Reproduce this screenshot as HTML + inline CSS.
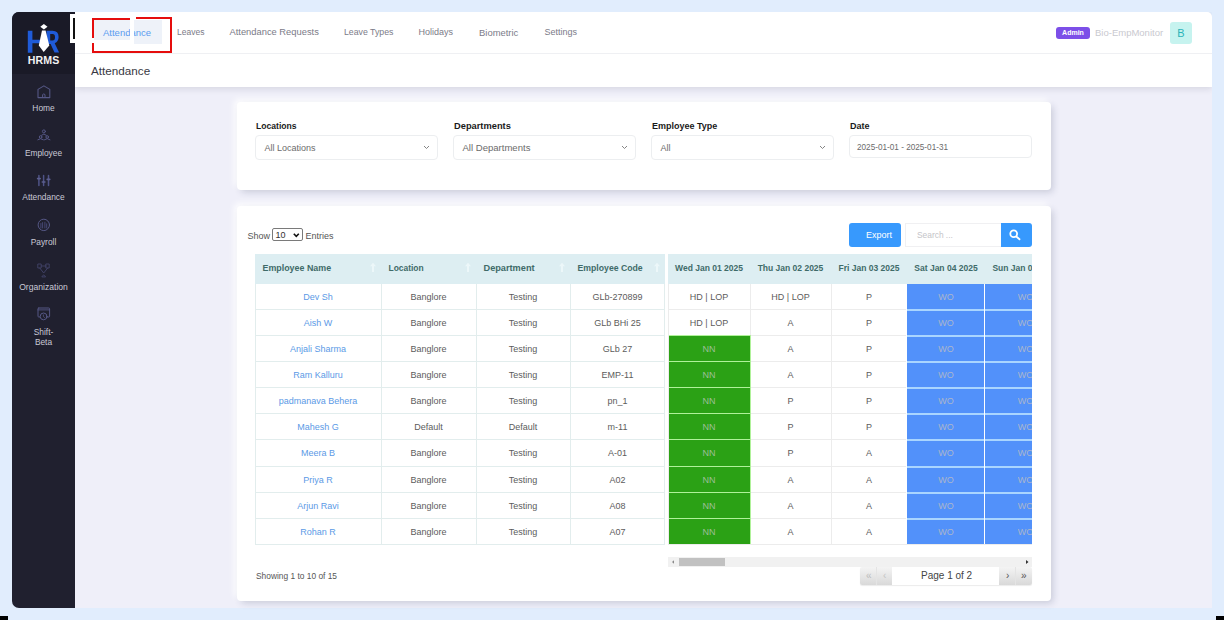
<!DOCTYPE html>
<html><head><meta charset="utf-8">
<style>
*{box-sizing:border-box;margin:0;padding:0}
html,body{width:1224px;height:620px;overflow:hidden}
body{background:#e1edfd;font-family:"Liberation Sans",sans-serif;position:relative;color:#555}
.abs{position:absolute}
.t{position:absolute;white-space:nowrap;line-height:1}
#side{left:12px;top:12px;width:63px;height:596px;background:#20202f;border-radius:7px 0 0 7px;overflow:hidden}
#logo{left:0;top:0;width:63px;height:62px;background:#1a1a27}
#main{left:75px;top:12px;width:1137px;height:596px;background:#efeff9;border-radius:0 5px 0 0}
#hdr{left:75px;top:12px;width:1137px;height:75px;background:#fff;border-radius:0 5px 0 0;box-shadow:0 2px 6px rgba(30,30,60,.12);clip-path:inset(0 0 -12px 0)}
#hline{left:75px;top:53px;width:1137px;height:1px;background:#eff0f3}
.nav{font-size:9px;color:#7b7b88}
.card{background:#fff;border-radius:4px;box-shadow:3px 3px 7px -1px rgba(40,50,90,.20),-3px -3px 6px rgba(255,255,255,.85)}
.lbl{font-size:9px;font-weight:700;color:#1a1a1a}
.sel{position:absolute;border:1px solid #eceef0;border-radius:4px;background:#fff}
.selt{font-size:9px;color:#6b6b6b}
.side-t{font-size:8.4px;color:#c9c9d6;text-align:center;width:63px;left:0}
table{border-collapse:collapse;table-layout:fixed;position:absolute}
td,th{height:26.2px;text-align:center;font-size:9px;color:#5c5c5c;white-space:nowrap;overflow:hidden;padding:0}
th{height:30px;background:#ddeef2;color:#3f6b69;font-weight:700;text-align:left;padding-left:7px}
#lt td{border:1px solid #d9eaea}
#lt th{border:1px solid #d9eaea;border-top:none}
#rt td{border:1px solid #ebebeb}
#rt th{border:1px solid #ddeef2;text-align:center;padding:0}
td.nm{color:#5b9ae6}
.th{font-size:9px;font-weight:700;color:#3f6b69}
.td{font-size:9px;color:#5c5c5c;text-align:center}
.td.nm{color:#5b9ae6}
.td.nn{color:#9fbf98}
.td.wo{color:#aab6cc}
.sorti{width:3px;height:9px;background:#eef7f8;border-radius:1px}
td.g{background:#2ea01c;color:#b9c9b5;border-color:#a7e49a !important}
td.b{background:#5592f6;color:#c7d2e6;border-color:#c4defc !important;border-left-color:#fff !important;border-right-color:#fff !important}
</style></head>
<body>
<!-- corner artifacts -->
<div class="abs" style="left:0;top:616px;width:8px;height:4px;background:#000"></div>
<div class="abs" style="left:1216px;top:616px;width:8px;height:4px;background:#000"></div>

<div id="main" class="abs"></div>
<div id="side" class="abs">
  <div id="logo" class="abs"></div>
</div>

<!-- sidebar content -->
<svg class="abs" style="left:26px;top:22px" width="36" height="32" viewBox="0 0 36 32">
  <path d="M1.8 8.7 H6.4 V17.7 H14 V21.2 H6.4 V30.8 H1.8 Z" fill="#1f5bd8"/>
  <path fill-rule="evenodd" d="M20.5 8.7 H26.5 Q32.6 8.7 32.6 15 Q32.6 19.6 28.7 21.2 L33.1 30.5 H28.5 L24.6 22 H20.5 Z M24.2 12.1 V18.6 H26.6 Q29 18.6 29 15.35 Q29 12.1 26.6 12.1 Z" fill="#1f5bd8"/>
  <path d="M17.9 2 L21.5 4.8 L17.9 7.6 L14.3 4.8 Z" fill="#fff"/>
  <path d="M16 8.4 H19.6 L23.3 23.5 L17.7 30 L12.8 23.5 Z" fill="#fff"/>
</svg>
<div class="t" style="left:12px;width:63px;text-align:center;top:55px;font-size:10.6px;font-weight:700;color:#f2f2f2;letter-spacing:0.1px">HRMS</div>

<svg class="abs" style="left:0;top:0" width="90" height="340" viewBox="0 0 90 340" fill="none" stroke="#555785" stroke-linejoin="round" stroke-linecap="round">
  <!-- home -->
  <path d="M38 97.6 V89.4 L43.9 85.9 L49.8 89.4 V97.6 Z" stroke-width="1.1"/>
  <path d="M42.6 97.4 V94.6 Q43.8 93.2 45 94.6 V97.4" stroke-width="1"/>
  <!-- employee -->
  <circle cx="43.9" cy="131.4" r="1.5" stroke-width="1"/>
  <path d="M41.5 135.2 Q43.9 132.6 46.3 135.2" stroke-width="1"/>
  <circle cx="40.6" cy="137" r="1.3" stroke-width="1"/>
  <circle cx="47.2" cy="137" r="1.3" stroke-width="1"/>
  <path d="M37.8 139.7 Q40.6 137.4 43.4 139.7 M44.4 139.7 Q47.2 137.4 50 139.7" stroke-width="1"/>
  <!-- attendance sliders -->
  <path d="M38.9 175.6 V185.6 M43.6 175.6 V185.6 M48.5 175.6 V185.6" stroke-width="1.5" stroke="#4f5387"/>
  <path d="M37.6 178.6 H40.2 M42.3 182 H44.9 M47.2 179.4 H49.8" stroke-width="1.6" stroke="#5d5f8f"/>
  <!-- payroll -->
  <circle cx="43.8" cy="224.9" r="5.7" stroke-width="1"/>
  <path d="M40.9 223.5 V228 M42.6 222.6 V228 M44.9 222.2 V228 M46.7 223.8 V228" stroke-width="0.9" stroke="#4a4c7c"/>
  <!-- organization -->
  <path d="M38.2 264 H41.2 V268 H38.2 Z M46.2 264 H49.2 V268 H46.2 Z" stroke-width="0.8" stroke="#464870"/>
  <path d="M41.2 266 H46.2 M39.7 268 L43.7 273 L47.7 268" stroke-width="0.8" stroke="#464870"/>
  <path d="M42 276.6 Q43.7 273.2 45.4 276.6 Z" stroke-width="0.8" stroke="#464870"/>
  <!-- shift -->
  <rect x="38" y="308" width="11.6" height="9" rx="0.8" stroke-width="1"/>
  <path d="M38 309.9 H49.6" stroke-width="0.9"/>
  <circle cx="43.6" cy="316.4" r="3.4" fill="#20202f" stroke-width="1"/>
  <path d="M43.4 314.9 V316.5 L44.5 317.5" stroke-width="0.8"/>
</svg>
<div class="t side-t" style="left:12px;top:104px">Home</div>

<div class="t side-t" style="left:12px;top:149px">Employee</div>

<div class="t side-t" style="left:12px;top:193px">Attendance</div>

<div class="t side-t" style="left:12px;top:237.5px">Payroll</div>

<div class="t side-t" style="left:12px;top:282.5px;font-size:8.6px">Organization</div>

<div class="t side-t" style="left:12px;top:327.5px">Shift-</div>
<div class="t side-t" style="left:12px;top:337.5px">Beta</div>

<div id="hdr" class="abs"></div>
<div id="hline" class="abs"></div>


<!-- header right -->
<div class="abs" style="left:1056px;top:27px;width:34px;height:12px;background:#7c4fe8;border-radius:3px"></div>
<div class="t" style="left:1056px;width:34px;text-align:center;top:29px;font-size:7px;font-weight:700;color:#fff">Admin</div>
<div class="t" style="left:1095px;top:28px;font-size:9.5px;color:#c9c9cf">Bio-EmpMonitor</div>
<div class="abs" style="left:1170px;top:22px;width:22px;height:22px;background:#c6f3ef;border-radius:3px"></div>
<div class="t" style="left:1170px;width:22px;text-align:center;top:28px;font-size:11px;color:#2bb4b8">B</div>

<!-- overlay artifacts -->
<div class="abs" style="left:70px;top:14px;width:5px;height:29px;background:#fff"></div>
<div class="abs" style="left:73px;top:18px;width:2px;height:21px;background:#111"></div>

<!-- nav -->
<div class="abs" style="left:94px;top:20px;width:68px;height:24px;background:#eef2f9"></div>
<div class="t nav" style="left:103px;top:28px;color:#5b9cf0;font-size:9.5px">Attendance</div>
<div class="t nav" style="left:177px;top:28px;font-size:8.5px">Leaves</div>
<div class="t nav" style="left:229.5px;top:28px;font-size:9.35px">Attendance Requests</div>
<div class="t nav" style="left:344px;top:28px;font-size:8.75px">Leave Types</div>
<div class="t nav" style="left:418.5px;top:28px">Holidays</div>
<div class="t nav" style="left:479px;top:28px;font-size:9.45px">Biometric</div>
<div class="t nav" style="left:544.5px;top:28px">Settings</div>


<div class="abs" style="left:92px;top:39.5px;width:40px;height:4px;background:#fff"></div>
<div class="abs" style="left:130px;top:18px;width:4px;height:25.5px;background:#fff"></div>
<!-- red highlight box -->
<div class="abs" style="left:92px;top:18px;width:2px;height:20px;background:#e50d0d"></div>
<div class="abs" style="left:92px;top:43px;width:2px;height:10px;background:#e50d0d"></div>
<div class="abs" style="left:92px;top:18px;width:38px;height:2px;background:#e50d0d"></div>
<div class="abs" style="left:136px;top:17px;width:36px;height:2px;background:#e50d0d"></div>
<div class="abs" style="left:170px;top:17px;width:2px;height:36px;background:#e50d0d"></div>
<div class="abs" style="left:92px;top:51px;width:80px;height:2px;background:#e50d0d"></div>

<div class="t" style="left:91px;top:65px;font-size:11.7px;color:#383842">Attendance</div>

<!-- filter card -->
<div class="abs card" style="left:237px;top:102px;width:814px;height:88px"></div>
<div class="t lbl" style="left:256px;top:121.5px;font-size:8.6px">Locations</div>
<div class="t lbl" style="left:454px;top:121.5px;font-size:9.3px">Departments</div>
<div class="t lbl" style="left:652px;top:121.5px">Employee Type</div>
<div class="t lbl" style="left:850px;top:121.5px">Date</div>
<div class="sel" style="left:255px;top:135px;width:183px;height:25px"></div>
<div class="sel" style="left:453px;top:135px;width:183px;height:25px"></div>
<div class="sel" style="left:651px;top:135px;width:183px;height:25px"></div>
<div class="sel" style="left:849px;top:135px;width:183px;height:23px"></div>
<div class="t selt" style="left:264.5px;top:143.5px">All Locations</div>
<div class="t selt" style="left:462.5px;top:143px;font-size:9.55px">All Departments</div>
<div class="t selt" style="left:660.5px;top:143.5px">All</div>
<div class="t selt" style="left:857px;top:143.5px;font-size:8.2px">2025-01-01 - 2025-01-31</div>


<svg class="abs" style="left:423px;top:145px" width="7" height="5" viewBox="0 0 7 5"><path d="M1 1 L3.5 3.5 L6 1" stroke="#777" stroke-width="0.9" fill="none"/></svg>
<svg class="abs" style="left:621px;top:145px" width="7" height="5" viewBox="0 0 7 5"><path d="M1 1 L3.5 3.5 L6 1" stroke="#777" stroke-width="0.9" fill="none"/></svg>
<svg class="abs" style="left:819px;top:145px" width="7" height="5" viewBox="0 0 7 5"><path d="M1 1 L3.5 3.5 L6 1" stroke="#777" stroke-width="0.9" fill="none"/></svg>

<!-- table card -->
<div class="abs card" style="left:237px;top:206px;width:814px;height:395px"></div>


<!-- table card controls -->
<div class="t" style="left:247.5px;top:231.5px;font-size:9px;color:#555">Show</div>
<div class="abs" style="left:272px;top:228px;width:31px;height:13px;border:1px solid #7a7a7a;border-radius:2px;background:#fff"></div>
<div class="t" style="left:275.5px;top:231px;font-size:9px;color:#333">10</div>
<svg class="abs" style="left:293px;top:233px" width="7" height="5" viewBox="0 0 7 5"><path d="M0.8 0.8 L3.3 3.3 L5.8 0.8" stroke="#111" stroke-width="1.6" fill="none"/></svg>
<div class="t" style="left:305.5px;top:231.5px;font-size:9px;color:#555">Entries</div>

<div class="abs" style="left:849px;top:223px;width:52px;height:24px;background:#3799fd;border-radius:3px"></div>
<div class="t" style="left:866px;top:231px;font-size:9px;color:#fff">Export</div>
<div class="abs" style="left:905px;top:223px;width:97px;height:24px;border:1px solid #f0f0f2;background:#fff"></div>
<div class="t" style="left:917px;top:231px;font-size:8.4px;color:#c4c4c8">Search ...</div>
<div class="abs" style="left:1001px;top:223px;width:31px;height:24px;background:#3799fd;border-radius:0 3px 3px 0"></div>
<svg class="abs" style="left:1008px;top:228px" width="14" height="14" viewBox="0 0 14 14" fill="none" stroke="#fff" stroke-width="1.8"><circle cx="5.7" cy="5.8" r="3.4"/><path d="M8.3 8.5 L11.5 11.3" stroke-linecap="round"/></svg>

<!-- scrollbar -->
<div class="abs" style="left:668px;top:557px;width:364px;height:10px;background:#f1f1f1"></div>
<div class="abs" style="left:679px;top:558px;width:46px;height:8px;background:#c1c1c1"></div>
<svg class="abs" style="left:670px;top:559px" width="6" height="6" viewBox="0 0 6 6"><path d="M4 1.2 L2 3 L4 4.8 Z" fill="#8a8a8a"/></svg>
<svg class="abs" style="left:1024px;top:559px" width="6" height="6" viewBox="0 0 6 6"><path d="M2 1 L4.5 3 L2 5 Z" fill="#333"/></svg>

<!-- pagination -->
<div class="abs" style="left:860px;top:567px;width:172px;height:18px;border-radius:2px;background:linear-gradient(#f4f4f4,#d9d9d9);box-shadow:0 1px 1px rgba(0,0,0,.08)"></div>
<div class="abs" style="left:876px;top:567px;width:1px;height:18px;background:#e4e4e4"></div>
<div class="abs" style="left:892px;top:567px;width:107px;height:18px;background:#fff"></div>
<div class="abs" style="left:1015px;top:567px;width:1px;height:18px;background:#e4e4e4"></div>
<div class="t" style="left:866px;top:570.5px;font-size:10px;color:#bcbcbc">«</div>
<div class="t" style="left:883px;top:570.5px;font-size:10px;color:#c4c4c4">‹</div>
<div class="t" style="left:921px;top:571px;font-size:10px;color:#444">Page 1 of 2</div>
<div class="t" style="left:1006px;top:570.5px;font-size:10px;color:#555">›</div>
<div class="t" style="left:1021px;top:570.5px;font-size:10px;color:#555">»</div>

<div class="t" style="left:256px;top:572px;font-size:8.4px;color:#555">Showing 1 to 10 of 15</div>

<!--TABLE-->
<div class="abs" style="left:255px;top:254px;width:410px;height:30px;background:#ddeef2"></div>
<div class="t th" style="left:262.5px;top:264px;font-size:8.9px">Employee Name</div>
<svg class="abs" style="left:369px;top:262px" width="8" height="11" viewBox="0 0 8 11"><path d="M4 0.8 L7 4.2 H5 V10 H3 V4.2 H1 Z" fill="#ecf7f9"/></svg>
<div class="t th" style="left:388.5px;top:264px;font-size:8.45px">Location</div>
<svg class="abs" style="left:464px;top:262px" width="8" height="11" viewBox="0 0 8 11"><path d="M4 0.8 L7 4.2 H5 V10 H3 V4.2 H1 Z" fill="#ecf7f9"/></svg>
<div class="t th" style="left:483.5px;top:264px;font-size:9.2px">Department</div>
<svg class="abs" style="left:558px;top:262px" width="8" height="11" viewBox="0 0 8 11"><path d="M4 0.8 L7 4.2 H5 V10 H3 V4.2 H1 Z" fill="#ecf7f9"/></svg>
<div class="t th" style="left:577.5px;top:264px;font-size:8.7px">Employee Code</div>
<svg class="abs" style="left:653px;top:262px" width="8" height="11" viewBox="0 0 8 11"><path d="M4 0.8 L7 4.2 H5 V10 H3 V4.2 H1 Z" fill="#ecf7f9"/></svg>
<div class="t td nm" style="left:255px;width:126px;top:293px">Dev Sh</div>
<div class="t td" style="left:381px;width:95px;top:293px">Banglore</div>
<div class="t td" style="left:476px;width:94px;top:293px">Testing</div>
<div class="t td" style="left:570px;width:95px;top:293px">GLb-270899</div>
<div class="t td nm" style="left:255px;width:126px;top:319px">Aish W</div>
<div class="t td" style="left:381px;width:95px;top:319px">Banglore</div>
<div class="t td" style="left:476px;width:94px;top:319px">Testing</div>
<div class="t td" style="left:570px;width:95px;top:319px">GLb BHi 25</div>
<div class="t td nm" style="left:255px;width:126px;top:345px">Anjali Sharma</div>
<div class="t td" style="left:381px;width:95px;top:345px">Banglore</div>
<div class="t td" style="left:476px;width:94px;top:345px">Testing</div>
<div class="t td" style="left:570px;width:95px;top:345px">GLb 27</div>
<div class="t td nm" style="left:255px;width:126px;top:371px">Ram Kalluru</div>
<div class="t td" style="left:381px;width:95px;top:371px">Banglore</div>
<div class="t td" style="left:476px;width:94px;top:371px">Testing</div>
<div class="t td" style="left:570px;width:95px;top:371px">EMP-11</div>
<div class="t td nm" style="left:255px;width:126px;top:397px">padmanava Behera</div>
<div class="t td" style="left:381px;width:95px;top:397px">Banglore</div>
<div class="t td" style="left:476px;width:94px;top:397px">Testing</div>
<div class="t td" style="left:570px;width:95px;top:397px">pn_1</div>
<div class="t td nm" style="left:255px;width:126px;top:423px">Mahesh G</div>
<div class="t td" style="left:381px;width:95px;top:423px">Default</div>
<div class="t td" style="left:476px;width:94px;top:423px">Default</div>
<div class="t td" style="left:570px;width:95px;top:423px">m-11</div>
<div class="t td nm" style="left:255px;width:126px;top:449px">Meera B</div>
<div class="t td" style="left:381px;width:95px;top:449px">Banglore</div>
<div class="t td" style="left:476px;width:94px;top:449px">Testing</div>
<div class="t td" style="left:570px;width:95px;top:449px">A-01</div>
<div class="t td nm" style="left:255px;width:126px;top:476px">Priya R</div>
<div class="t td" style="left:381px;width:95px;top:476px">Banglore</div>
<div class="t td" style="left:476px;width:94px;top:476px">Testing</div>
<div class="t td" style="left:570px;width:95px;top:476px">A02</div>
<div class="t td nm" style="left:255px;width:126px;top:502px">Arjun Ravi</div>
<div class="t td" style="left:381px;width:95px;top:502px">Banglore</div>
<div class="t td" style="left:476px;width:94px;top:502px">Testing</div>
<div class="t td" style="left:570px;width:95px;top:502px">A08</div>
<div class="t td nm" style="left:255px;width:126px;top:528px">Rohan R</div>
<div class="t td" style="left:381px;width:95px;top:528px">Banglore</div>
<div class="t td" style="left:476px;width:94px;top:528px">Testing</div>
<div class="t td" style="left:570px;width:95px;top:528px">A07</div>
<div class="abs" style="left:255px;top:309px;width:410px;height:1px;background:#e2eded"></div>
<div class="abs" style="left:255px;top:335px;width:410px;height:1px;background:#e2eded"></div>
<div class="abs" style="left:255px;top:361px;width:410px;height:1px;background:#e2eded"></div>
<div class="abs" style="left:255px;top:387px;width:410px;height:1px;background:#e2eded"></div>
<div class="abs" style="left:255px;top:413px;width:410px;height:1px;background:#e2eded"></div>
<div class="abs" style="left:255px;top:439px;width:410px;height:1px;background:#e2eded"></div>
<div class="abs" style="left:255px;top:466px;width:410px;height:1px;background:#e2eded"></div>
<div class="abs" style="left:255px;top:492px;width:410px;height:1px;background:#e2eded"></div>
<div class="abs" style="left:255px;top:518px;width:410px;height:1px;background:#e2eded"></div>
<div class="abs" style="left:255px;top:544px;width:410px;height:1px;background:#e2eded"></div>
<div class="abs" style="left:255px;top:284px;width:1px;height:261px;background:#e2eded"></div>
<div class="abs" style="left:381px;top:284px;width:1px;height:261px;background:#e2eded"></div>
<div class="abs" style="left:476px;top:284px;width:1px;height:261px;background:#e2eded"></div>
<div class="abs" style="left:570px;top:284px;width:1px;height:261px;background:#e2eded"></div>
<div class="abs" style="left:664px;top:284px;width:1px;height:261px;background:#e2eded"></div>
<div class="abs" style="left:668px;top:254px;width:364px;height:291px;overflow:hidden">
<div class="abs" style="left:0;top:0;width:400px;height:30px;background:#ddeef2"></div>
<div class="t th" style="left:0px;width:82px;text-align:center;top:10px;font-size:8.5px">Wed Jan 01 2025</div>
<div class="t th" style="left:82px;width:81px;text-align:center;top:10px;font-size:8.5px">Thu Jan 02 2025</div>
<div class="t th" style="left:163px;width:76px;text-align:center;top:10px;font-size:8.5px">Fri Jan 03 2025</div>
<div class="t th" style="left:239px;width:78px;text-align:center;top:10px;font-size:8.5px">Sat Jan 04 2025</div>
<div class="t th" style="left:317px;width:81px;text-align:center;top:10px;font-size:8.5px">Sun Jan 05 2025</div>
<div class="abs" style="left:0;top:55px;width:400px;height:1px;background:#ececec"></div>
<div class="abs" style="left:0;top:81px;width:400px;height:1px;background:#ececec"></div>
<div class="abs" style="left:0;top:107px;width:400px;height:1px;background:#ececec"></div>
<div class="abs" style="left:0;top:133px;width:400px;height:1px;background:#ececec"></div>
<div class="abs" style="left:0;top:159px;width:400px;height:1px;background:#ececec"></div>
<div class="abs" style="left:0;top:185px;width:400px;height:1px;background:#ececec"></div>
<div class="abs" style="left:0;top:212px;width:400px;height:1px;background:#ececec"></div>
<div class="abs" style="left:0;top:238px;width:400px;height:1px;background:#ececec"></div>
<div class="abs" style="left:0;top:264px;width:400px;height:1px;background:#ececec"></div>
<div class="abs" style="left:0;top:290px;width:400px;height:1px;background:#ececec"></div>
<div class="abs" style="left:0px;top:30px;width:1px;height:261px;background:#ececec"></div>
<div class="abs" style="left:82px;top:30px;width:1px;height:261px;background:#ececec"></div>
<div class="abs" style="left:163px;top:30px;width:1px;height:261px;background:#ececec"></div>
<div class="abs" style="left:239px;top:30px;width:1px;height:261px;background:#ececec"></div>
<div class="abs" style="left:317px;top:30px;width:1px;height:261px;background:#ececec"></div>
<div class="abs" style="left:398px;top:30px;width:1px;height:261px;background:#ececec"></div>
<div class="t td" style="left:0px;width:82px;top:39px">HD | LOP</div>
<div class="t td" style="left:82px;width:81px;top:39px">HD | LOP</div>
<div class="t td" style="left:163px;width:76px;top:39px">P</div>
<div class="abs" style="left:238px;top:30px;width:79px;height:25px;background:#fff"></div>
<div class="abs" style="left:239px;top:30px;width:77px;height:25px;background:#a9d5ff"></div>
<div class="abs" style="left:239px;top:30px;width:77px;height:25px;background:#5291fa"></div>
<div class="t td wo" style="left:239px;width:78px;top:39px">WO</div>
<div class="abs" style="left:316px;top:30px;width:82px;height:25px;background:#fff"></div>
<div class="abs" style="left:317px;top:30px;width:81px;height:25px;background:#a9d5ff"></div>
<div class="abs" style="left:317px;top:30px;width:80px;height:25px;background:#5291fa"></div>
<div class="t td wo" style="left:317px;width:81px;top:39px">WO</div>
<div class="t td" style="left:0px;width:82px;top:65px">HD | LOP</div>
<div class="t td" style="left:82px;width:81px;top:65px">A</div>
<div class="t td" style="left:163px;width:76px;top:65px">P</div>
<div class="abs" style="left:238px;top:55px;width:79px;height:26px;background:#fff"></div>
<div class="abs" style="left:239px;top:55px;width:77px;height:26px;background:#a9d5ff"></div>
<div class="abs" style="left:239px;top:57px;width:77px;height:24px;background:#5291fa"></div>
<div class="t td wo" style="left:239px;width:78px;top:65px">WO</div>
<div class="abs" style="left:316px;top:55px;width:82px;height:26px;background:#fff"></div>
<div class="abs" style="left:317px;top:55px;width:81px;height:26px;background:#a9d5ff"></div>
<div class="abs" style="left:317px;top:57px;width:80px;height:24px;background:#5291fa"></div>
<div class="t td wo" style="left:317px;width:81px;top:65px">WO</div>
<div class="abs" style="left:1px;top:81px;width:82px;height:26px;background:#b0f29a"></div>
<div class="abs" style="left:1px;top:82px;width:81px;height:25px;background:#2ba115"></div>
<div class="t td nn" style="left:0px;width:82px;top:91px">NN</div>
<div class="t td" style="left:82px;width:81px;top:91px">A</div>
<div class="t td" style="left:163px;width:76px;top:91px">P</div>
<div class="abs" style="left:238px;top:81px;width:79px;height:26px;background:#fff"></div>
<div class="abs" style="left:239px;top:81px;width:77px;height:26px;background:#a9d5ff"></div>
<div class="abs" style="left:239px;top:83px;width:77px;height:24px;background:#5291fa"></div>
<div class="t td wo" style="left:239px;width:78px;top:91px">WO</div>
<div class="abs" style="left:316px;top:81px;width:82px;height:26px;background:#fff"></div>
<div class="abs" style="left:317px;top:81px;width:81px;height:26px;background:#a9d5ff"></div>
<div class="abs" style="left:317px;top:83px;width:80px;height:24px;background:#5291fa"></div>
<div class="t td wo" style="left:317px;width:81px;top:91px">WO</div>
<div class="abs" style="left:1px;top:107px;width:82px;height:26px;background:#b0f29a"></div>
<div class="abs" style="left:1px;top:108px;width:81px;height:25px;background:#2ba115"></div>
<div class="t td nn" style="left:0px;width:82px;top:117px">NN</div>
<div class="t td" style="left:82px;width:81px;top:117px">A</div>
<div class="t td" style="left:163px;width:76px;top:117px">P</div>
<div class="abs" style="left:238px;top:107px;width:79px;height:26px;background:#fff"></div>
<div class="abs" style="left:239px;top:107px;width:77px;height:26px;background:#a9d5ff"></div>
<div class="abs" style="left:239px;top:109px;width:77px;height:24px;background:#5291fa"></div>
<div class="t td wo" style="left:239px;width:78px;top:117px">WO</div>
<div class="abs" style="left:316px;top:107px;width:82px;height:26px;background:#fff"></div>
<div class="abs" style="left:317px;top:107px;width:81px;height:26px;background:#a9d5ff"></div>
<div class="abs" style="left:317px;top:109px;width:80px;height:24px;background:#5291fa"></div>
<div class="t td wo" style="left:317px;width:81px;top:117px">WO</div>
<div class="abs" style="left:1px;top:133px;width:82px;height:26px;background:#b0f29a"></div>
<div class="abs" style="left:1px;top:134px;width:81px;height:25px;background:#2ba115"></div>
<div class="t td nn" style="left:0px;width:82px;top:143px">NN</div>
<div class="t td" style="left:82px;width:81px;top:143px">P</div>
<div class="t td" style="left:163px;width:76px;top:143px">P</div>
<div class="abs" style="left:238px;top:133px;width:79px;height:26px;background:#fff"></div>
<div class="abs" style="left:239px;top:133px;width:77px;height:26px;background:#a9d5ff"></div>
<div class="abs" style="left:239px;top:135px;width:77px;height:24px;background:#5291fa"></div>
<div class="t td wo" style="left:239px;width:78px;top:143px">WO</div>
<div class="abs" style="left:316px;top:133px;width:82px;height:26px;background:#fff"></div>
<div class="abs" style="left:317px;top:133px;width:81px;height:26px;background:#a9d5ff"></div>
<div class="abs" style="left:317px;top:135px;width:80px;height:24px;background:#5291fa"></div>
<div class="t td wo" style="left:317px;width:81px;top:143px">WO</div>
<div class="abs" style="left:1px;top:159px;width:82px;height:26px;background:#b0f29a"></div>
<div class="abs" style="left:1px;top:160px;width:81px;height:25px;background:#2ba115"></div>
<div class="t td nn" style="left:0px;width:82px;top:169px">NN</div>
<div class="t td" style="left:82px;width:81px;top:169px">P</div>
<div class="t td" style="left:163px;width:76px;top:169px">P</div>
<div class="abs" style="left:238px;top:159px;width:79px;height:26px;background:#fff"></div>
<div class="abs" style="left:239px;top:159px;width:77px;height:26px;background:#a9d5ff"></div>
<div class="abs" style="left:239px;top:161px;width:77px;height:24px;background:#5291fa"></div>
<div class="t td wo" style="left:239px;width:78px;top:169px">WO</div>
<div class="abs" style="left:316px;top:159px;width:82px;height:26px;background:#fff"></div>
<div class="abs" style="left:317px;top:159px;width:81px;height:26px;background:#a9d5ff"></div>
<div class="abs" style="left:317px;top:161px;width:80px;height:24px;background:#5291fa"></div>
<div class="t td wo" style="left:317px;width:81px;top:169px">WO</div>
<div class="abs" style="left:1px;top:185px;width:82px;height:27px;background:#b0f29a"></div>
<div class="abs" style="left:1px;top:186px;width:81px;height:26px;background:#2ba115"></div>
<div class="t td nn" style="left:0px;width:82px;top:195px">NN</div>
<div class="t td" style="left:82px;width:81px;top:195px">P</div>
<div class="t td" style="left:163px;width:76px;top:195px">A</div>
<div class="abs" style="left:238px;top:185px;width:79px;height:27px;background:#fff"></div>
<div class="abs" style="left:239px;top:185px;width:77px;height:27px;background:#a9d5ff"></div>
<div class="abs" style="left:239px;top:187px;width:77px;height:25px;background:#5291fa"></div>
<div class="t td wo" style="left:239px;width:78px;top:195px">WO</div>
<div class="abs" style="left:316px;top:185px;width:82px;height:27px;background:#fff"></div>
<div class="abs" style="left:317px;top:185px;width:81px;height:27px;background:#a9d5ff"></div>
<div class="abs" style="left:317px;top:187px;width:80px;height:25px;background:#5291fa"></div>
<div class="t td wo" style="left:317px;width:81px;top:195px">WO</div>
<div class="abs" style="left:1px;top:212px;width:82px;height:26px;background:#b0f29a"></div>
<div class="abs" style="left:1px;top:213px;width:81px;height:25px;background:#2ba115"></div>
<div class="t td nn" style="left:0px;width:82px;top:222px">NN</div>
<div class="t td" style="left:82px;width:81px;top:222px">A</div>
<div class="t td" style="left:163px;width:76px;top:222px">A</div>
<div class="abs" style="left:238px;top:212px;width:79px;height:26px;background:#fff"></div>
<div class="abs" style="left:239px;top:212px;width:77px;height:26px;background:#a9d5ff"></div>
<div class="abs" style="left:239px;top:214px;width:77px;height:24px;background:#5291fa"></div>
<div class="t td wo" style="left:239px;width:78px;top:222px">WO</div>
<div class="abs" style="left:316px;top:212px;width:82px;height:26px;background:#fff"></div>
<div class="abs" style="left:317px;top:212px;width:81px;height:26px;background:#a9d5ff"></div>
<div class="abs" style="left:317px;top:214px;width:80px;height:24px;background:#5291fa"></div>
<div class="t td wo" style="left:317px;width:81px;top:222px">WO</div>
<div class="abs" style="left:1px;top:238px;width:82px;height:26px;background:#b0f29a"></div>
<div class="abs" style="left:1px;top:239px;width:81px;height:25px;background:#2ba115"></div>
<div class="t td nn" style="left:0px;width:82px;top:248px">NN</div>
<div class="t td" style="left:82px;width:81px;top:248px">A</div>
<div class="t td" style="left:163px;width:76px;top:248px">A</div>
<div class="abs" style="left:238px;top:238px;width:79px;height:26px;background:#fff"></div>
<div class="abs" style="left:239px;top:238px;width:77px;height:26px;background:#a9d5ff"></div>
<div class="abs" style="left:239px;top:240px;width:77px;height:24px;background:#5291fa"></div>
<div class="t td wo" style="left:239px;width:78px;top:248px">WO</div>
<div class="abs" style="left:316px;top:238px;width:82px;height:26px;background:#fff"></div>
<div class="abs" style="left:317px;top:238px;width:81px;height:26px;background:#a9d5ff"></div>
<div class="abs" style="left:317px;top:240px;width:80px;height:24px;background:#5291fa"></div>
<div class="t td wo" style="left:317px;width:81px;top:248px">WO</div>
<div class="abs" style="left:1px;top:264px;width:82px;height:26px;background:#b0f29a"></div>
<div class="abs" style="left:1px;top:265px;width:81px;height:25px;background:#2ba115"></div>
<div class="t td nn" style="left:0px;width:82px;top:274px">NN</div>
<div class="t td" style="left:82px;width:81px;top:274px">A</div>
<div class="t td" style="left:163px;width:76px;top:274px">A</div>
<div class="abs" style="left:238px;top:264px;width:79px;height:26px;background:#fff"></div>
<div class="abs" style="left:239px;top:264px;width:77px;height:26px;background:#a9d5ff"></div>
<div class="abs" style="left:239px;top:266px;width:77px;height:24px;background:#5291fa"></div>
<div class="t td wo" style="left:239px;width:78px;top:274px">WO</div>
<div class="abs" style="left:316px;top:264px;width:82px;height:26px;background:#fff"></div>
<div class="abs" style="left:317px;top:264px;width:81px;height:26px;background:#a9d5ff"></div>
<div class="abs" style="left:317px;top:266px;width:80px;height:24px;background:#5291fa"></div>
<div class="t td wo" style="left:317px;width:81px;top:274px">WO</div>
</div>
<!--/TABLE-->
</body></html>
